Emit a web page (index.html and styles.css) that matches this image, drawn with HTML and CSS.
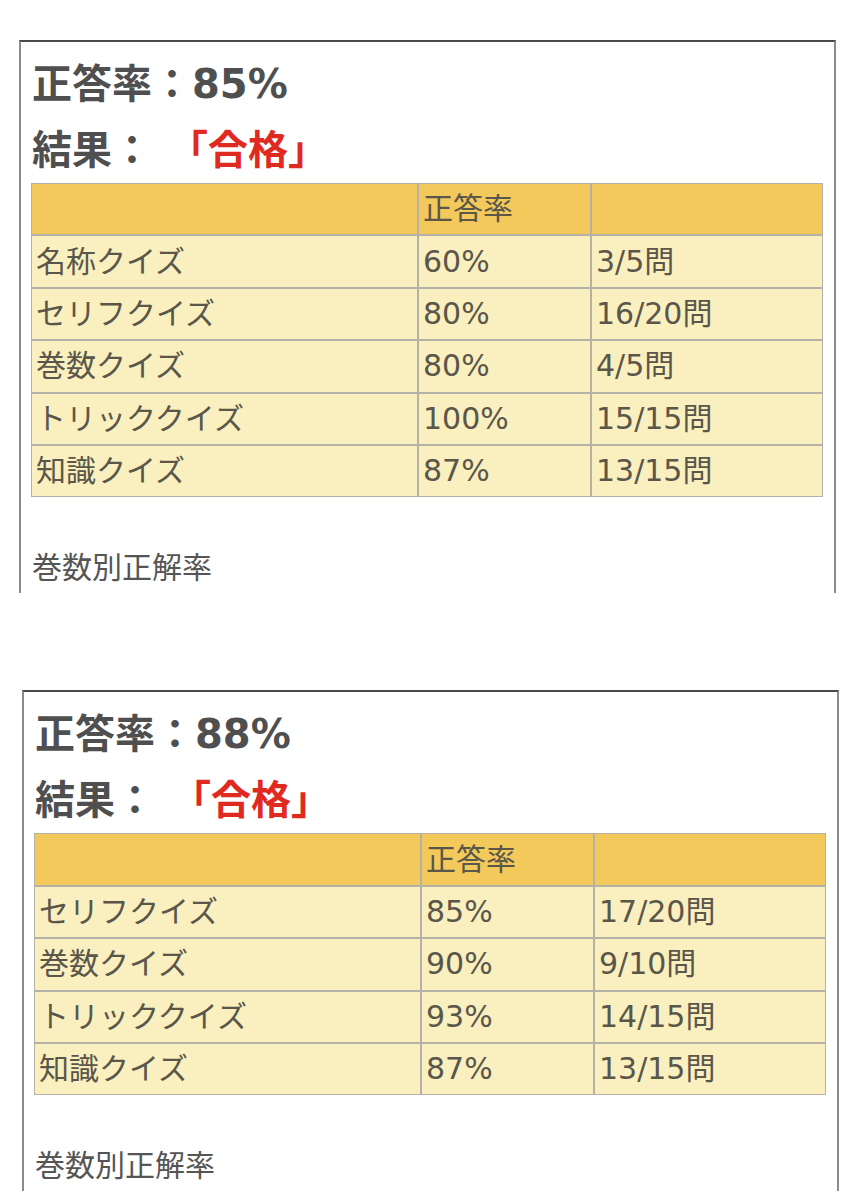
FILE: index.html
```html
<!DOCTYPE html>
<html lang="ja">
<head>
<meta charset="utf-8">
<title>結果</title>
<link rel="stylesheet" href="styles.css">
</head>
<body>
<main class="page">
  <section class="result result-first">
    <p class="rate">正答率：85%</p>
    <p class="verdict">結果：<span class="pass">「合格」</span></p>
    <table class="scores">
      <tr class="head"><td class="c1"></td><td class="c2">正答率</td><td class="c3"></td></tr>
      <tr><td>名称クイズ</td><td>60%</td><td>3/5問</td></tr>
      <tr><td>セリフクイズ</td><td>80%</td><td>16/20問</td></tr>
      <tr><td>巻数クイズ</td><td>80%</td><td>4/5問</td></tr>
      <tr><td>トリッククイズ</td><td>100%</td><td>15/15問</td></tr>
      <tr><td>知識クイズ</td><td>87%</td><td>13/15問</td></tr>
    </table>
    <p class="sub">巻数別正解率</p>
  </section>

  <section class="result result-second">
    <p class="rate">正答率：88%</p>
    <p class="verdict">結果：<span class="pass">「合格」</span></p>
    <table class="scores">
      <tr class="head"><td class="c1"></td><td class="c2">正答率</td><td class="c3"></td></tr>
      <tr><td>セリフクイズ</td><td>85%</td><td>17/20問</td></tr>
      <tr><td>巻数クイズ</td><td>90%</td><td>9/10問</td></tr>
      <tr><td>トリッククイズ</td><td>93%</td><td>14/15問</td></tr>
      <tr><td>知識クイズ</td><td>87%</td><td>13/15問</td></tr>
    </table>
    <p class="sub">巻数別正解率</p>
  </section>
</main>
</body>
</html>
```
FILE: styles.css
```css
html, body {
  margin: 0;
  padding: 0;
  background: #ffffff;
}

body {
  font-family: "DejaVu Sans", "Noto Sans CJK JP", sans-serif;
  color: #4d4d4d;
}

.page {
  padding-top: 40px;
  display: flex;
  flex-direction: column;
}

.result {
  width: 817px;
  box-sizing: border-box;
  border-top: 2px solid #4a4a4a;
  border-left: 2px solid #8c8c8c;
  border-right: 2px solid #8c8c8c;
  padding: 9px 11px 5px 10px;
}

.result-first {
  margin-left: 19px;
}

.result-second {
  margin-left: 22px;
  margin-top: 97px;
}

.rate,
.verdict {
  margin: 0;
  font-size: 40px;
  font-weight: 700;
  line-height: 66px;
  color: #4f4f4f;
  padding-left: 1px;
}

.pass {
  color: #e02a1f;
  margin-left: 36px;
}

.scores {
  width: 792px;
  border-collapse: separate;
  border-spacing: 0;
  table-layout: fixed;
  font-size: 30px;
  color: #5a564a;
}

.scores td {
  height: 50.4px;
  padding: 0 4px;
  border: 1px solid #b3b1a8;
  background: #f9efbf;
  vertical-align: middle;
  line-height: 1.2;
  white-space: nowrap;
}

.scores .head td {
  background: #f3c95b;
}

.scores .c1 { width: 377px; }
.scores .c2 { width: 163px; }

.sub {
  margin: 51px 0 0;
  font-size: 30px;
  line-height: 40px;
  color: #555555;
  padding-left: 1px;
}
```
